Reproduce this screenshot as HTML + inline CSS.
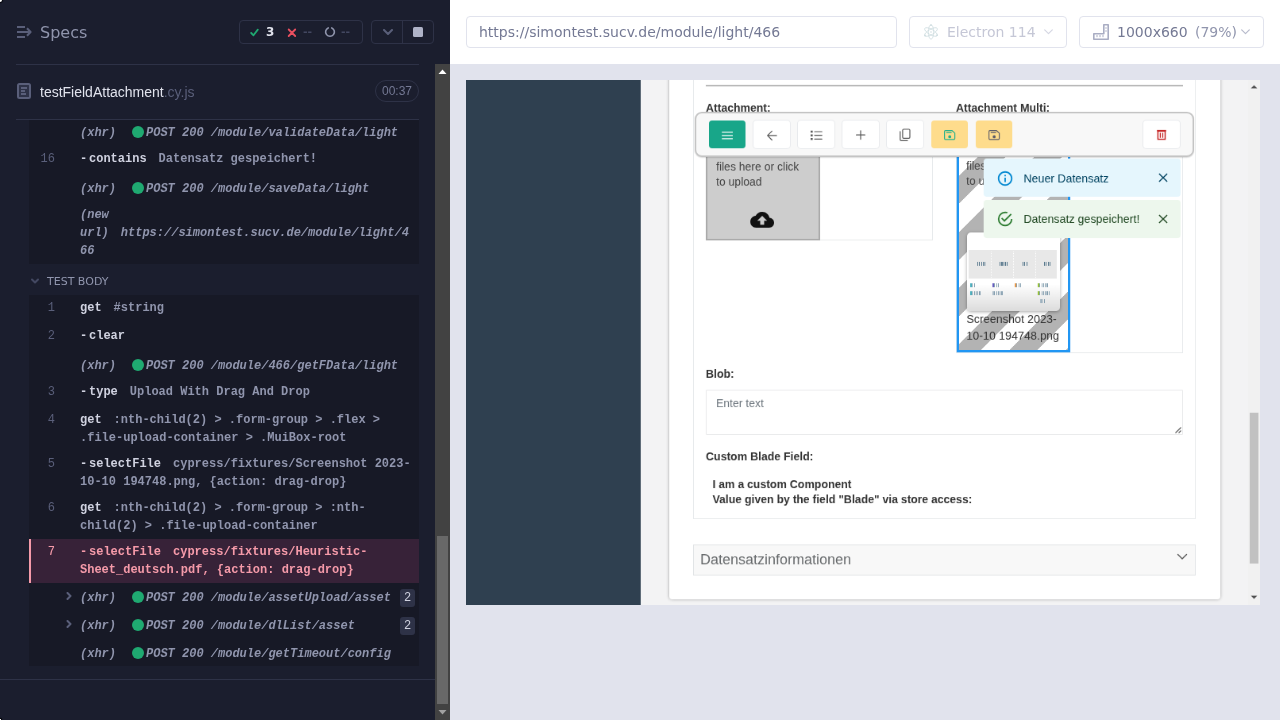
<!DOCTYPE html>
<html lang="en">
<head>
<meta charset="utf-8">
<title>Cypress</title>
<style>
*{box-sizing:border-box;margin:0;padding:0}
html,body{width:1280px;height:720px;overflow:hidden;background:#fff}
body{position:relative;font-family:"Liberation Sans",sans-serif}
.abs{position:absolute}
/* ---------- reporter ---------- */
#rep{will-change:transform;position:absolute;left:0;top:0;width:450px;height:720px;background:#1b1e2e;overflow:hidden}
.ui{font-family:"DejaVu Sans","Liberation Sans",sans-serif}
.mono{font-family:"Liberation Mono",monospace;font-size:12px;line-height:18px;white-space:pre}
.hline{position:absolute;left:16px;width:403px;height:1px;background:#2e3247}
.logbg{position:absolute;left:29px;width:390px;background:#171926}
.row{position:absolute;left:0;width:419px;height:18px}
.num{position:absolute;left:29px;width:26px;text-align:right;color:#5a5f7a;font-family:"Liberation Mono",monospace;font-size:12px;line-height:18px}
.txt{position:absolute;left:80px;font-weight:bold;color:#9095ad;font-family:"Liberation Mono",monospace;font-size:12px;line-height:18px;white-space:pre}
.txt b{color:#d0d2e0;font-weight:bold}
.dash{display:inline-block;width:9px;font-weight:bold;color:#d0d2e0}
.gap{display:inline-block;width:12px}
.gap2{display:inline-block;width:12px}
.pink,.pink b,.pink .dash{color:#f59aa9}
.num.pink{color:#f59aa9}
.xhr{font-style:italic;font-weight:bold;color:#9095ad}
.dot{position:absolute;left:132px;width:12px;height:12px;border-radius:50%;background:#1fa971}
.badge{position:absolute;left:400px;width:15px;height:18px;border-radius:3px;background:#2e3247;color:#d0d2e0;font-family:"Liberation Mono",monospace;font-size:12px;line-height:18px;text-align:center}
/* ---------- right ---------- */
#right{will-change:transform;position:absolute;left:450px;top:0;width:830px;height:720px;background:#e1e3ed}
#hdr{position:absolute;left:0;top:0;width:830px;height:64px;background:#fff}
.box{position:absolute;top:16px;height:32px;border:1px solid #e1e3ed;border-radius:4px;background:#fff}
/* ---------- AUT ---------- */
#autwrap{will-change:transform;position:absolute;left:466px;top:80px;width:794px;height:525px;overflow:hidden;background:#f3f3f4}
#aut{position:absolute;left:0;top:0;width:1000px;height:660px;transform:scale(0.794);transform-origin:0 0;font-family:"Liberation Sans",sans-serif;font-size:13px;color:#333}
.lbl{position:absolute;font-weight:bold;font-size:14px;line-height:16px;color:#333;white-space:pre}
.dz{position:absolute;font-size:14px;line-height:19px;color:#444;white-space:pre}
.tb{position:absolute;top:50.600px;width:46px;height:35.500px;border-radius:4px;background:#fff;box-shadow:0 0 0 1px #e8eaed}
.toast{position:absolute;left:652px;width:248px;height:48px;border-radius:4px;font-size:14.300px;line-height:20px}
.toast span{position:absolute;left:50.200px;top:14.500px;white-space:pre}
.tw{position:absolute;height:5px;background:repeating-linear-gradient(90deg,#2c5670 0,#2c5670 1.200px,transparent 1.200px,transparent 2.300px);opacity:.8}
.ti{position:absolute;height:5px;opacity:.85}
</style>
</head>
<body>
<div id="rep">
<!-- top-left artefact -->
<div class="abs" style="left:0;top:0;width:2px;height:2px;background:#fff;border-radius:0 0 2px 0;box-shadow:0 0 1px 1px #05060c"></div>
<div class="abs" style="left:0;top:719px;width:1px;height:1px;background:#fff;box-shadow:0 0 1px 1px #05060c"></div>
<!-- Specs header -->
<svg class="abs" style="left:17px;top:25px" width="15" height="14" viewBox="0 0 15 14"><g fill="none" stroke="#5a5f7a" stroke-width="2" stroke-linejoin="round"><path d="M0 2h8"/><path d="M0 7h12.500"/><path d="M0 12h8"/><path d="M10 3.300l3.600 3.700-3.600 3.700"/></g></svg>
<div class="abs ui" style="left:40px;top:22px;font-size:16px;line-height:22px;color:#9095ad">Specs</div>
<!-- stats -->
<div class="abs" style="left:239px;top:20px;width:124px;height:24px;border:1px solid #2e3247;border-radius:4px"></div>
<svg class="abs" style="left:249.500px;top:27.500px" width="9" height="9" viewBox="0 0 9 9"><path d="M1.200 5l2.300 2.300L7.800 1.600" fill="none" stroke="#1fa971" stroke-width="1.8" stroke-linecap="round" stroke-linejoin="round"/></svg>
<div class="abs ui" style="left:266px;top:24px;font-size:12px;line-height:16px;font-weight:bold;color:#e1e3ed">3</div>
<svg class="abs" style="left:287px;top:27.500px" width="10" height="10" viewBox="0 0 10 10"><path d="M1.700 1.500l6.500 6.500M8.200 1.500l-6.500 6.500" fill="none" stroke="#e94f5f" stroke-width="1.8" stroke-linecap="round"/></svg>
<div class="abs ui" style="left:303px;top:24px;font-size:11px;line-height:16px;font-weight:bold;color:#434861">--</div>
<svg class="abs" style="left:324px;top:26px" width="12" height="12" viewBox="0 0 12 12"><path d="M4.2 1.9A4.4 4.4 0 1 0 7.8 1.9" fill="none" stroke="#9095ad" stroke-width="1.6" stroke-linecap="round"/></svg>
<div class="abs ui" style="left:341px;top:24px;font-size:11px;line-height:16px;font-weight:bold;color:#434861">--</div>
<!-- controls -->
<div class="abs" style="left:371px;top:20px;width:63px;height:24px;border:1px solid #2e3247;border-radius:4px"></div>
<div class="abs" style="left:402px;top:20px;width:1px;height:24px;background:#2e3247"></div>
<svg class="abs" style="left:383px;top:29px" width="10" height="6" viewBox="0 0 10 6"><path d="M1 1l4 4 4-4" fill="none" stroke="#5a5f7a" stroke-width="2" stroke-linecap="round" stroke-linejoin="round"/></svg>
<div class="abs" style="left:413px;top:27px;width:10px;height:10px;background:#afb3c7;border-radius:1.5px"></div>
<div class="hline" style="top:64px"></div>
<!-- spec file row -->
<svg class="abs" style="left:17px;top:83px" width="14" height="16" viewBox="0 0 14 16"><rect x="1" y="1" width="12" height="14" rx="1.5" fill="#2e3247" stroke="#5a5f7a" stroke-width="2"/><path d="M4 5h6M4 8h4M4 11h5" stroke="#5a5f7a" stroke-width="2"/></svg>
<div class="abs" style="left:40px;top:83px;font-size:14px;line-height:18px;color:#e1e3ed;white-space:pre">testFieldAttachment<span style="color:#5a5f7a">.cy.js</span></div>
<div class="abs" style="left:375px;top:80px;width:44px;height:22px;border:1px solid #2e3247;border-radius:11px;color:#747994;font-size:12px;line-height:20px;text-align:center">00:37</div>
<div class="hline" style="top:119px"></div>
<!-- TEST BODY -->
<svg class="abs" style="left:31px;top:278px" width="8" height="7" viewBox="0 0 8 7"><path d="M1 1.5l3 3 3-3" fill="none" stroke="#434861" stroke-width="2" stroke-linecap="round" stroke-linejoin="round"/></svg>
<div class="abs ui" style="left:47px;top:274px;font-size:11px;line-height:16px;color:#9095ad">TEST BODY</div>
<!-- bottom line + scrollbar -->
<div class="abs" style="left:0;top:679px;width:436px;height:1px;background:#2e3247"></div>
<div class="abs" style="left:435px;top:64px;width:15px;height:656px;background:#424242"></div>
<div class="abs" style="left:437px;top:536px;width:11px;height:168px;background:#686868"></div>
<svg class="abs" style="left:438px;top:69px" width="9" height="6" viewBox="0 0 9 6"><path d="M4.5 0.5L8.5 5h-8z" fill="#fff"/></svg>
<svg class="abs" style="left:438px;top:709px" width="9" height="6" viewBox="0 0 9 6"><path d="M4.5 5.5L8.5 1h-8z" fill="#a0a0a0"/></svg>
<div class="logbg" style="top:120px;height:144px"></div>
<div class="txt xhr" style="top:124px">(xhr)</div><div class="dot" style="top:126px"></div><div class="txt xhr" style="left:146px;top:124px">POST 200 /module/validateData/light</div>
<div class="num " style="top:150px">16</div><div class="txt " style="top:150px"><span class="dash">-</span><b>contains</b><span class=gap></span>Datensatz gespeichert!</div>
<div class="txt xhr" style="top:180px">(xhr)</div><div class="dot" style="top:182px"></div><div class="txt xhr" style="left:146px;top:180px">POST 200 /module/saveData/light</div>
<div class="txt xhr" style="top:206px">(new
url)<span class="gap2"></span>https://simontest.sucv.de/module/light/4
66</div>
<div class="logbg" style="top:295px;height:371px"></div>
<div class="num " style="top:299px">1</div><div class="txt " style="top:299px"><b>get</b><span class=gap></span>#string</div>
<div class="num " style="top:327px">2</div><div class="txt " style="top:327px"><span class="dash">-</span><b>clear</b></div>
<div class="txt xhr" style="top:357px">(xhr)</div><div class="dot" style="top:359px"></div><div class="txt xhr" style="left:146px;top:357px">POST 200 /module/466/getFData/light</div>
<div class="num " style="top:383px">3</div><div class="txt " style="top:383px"><span class="dash">-</span><b>type</b><span class=gap></span>Upload With Drag And Drop</div>
<div class="num " style="top:411px">4</div><div class="txt " style="top:411px"><b>get</b><span class=gap></span>:nth-child(2) &gt; .form-group &gt; .flex &gt;
.file-upload-container &gt; .MuiBox-root</div>
<div class="num " style="top:455px">5</div><div class="txt " style="top:455px"><span class="dash">-</span><b>selectFile</b><span class=gap></span>cypress/fixtures/Screenshot 2023-
10-10 194748.png, {action: drag-drop}</div>
<div class="num " style="top:499px">6</div><div class="txt " style="top:499px"><b>get</b><span class=gap></span>:nth-child(2) &gt; .form-group &gt; :nth-
child(2) &gt; .file-upload-container</div>
<div class="abs" style="left:29px;top:539px;width:390px;height:44px;background:#372238;border-left:2px solid #f59aa9"></div>
<div class="num pink" style="top:543px">7</div><div class="txt pink" style="top:543px"><span class="dash">-</span><b>selectFile</b><span class=gap></span>cypress/fixtures/Heuristic-
Sheet_deutsch.pdf, {action: drag-drop}</div>
<svg class="abs" style="left:66px;top:592px" width="7" height="8" viewBox="0 0 7 8"><path d="M1.500 1l3 3-3 3" fill="none" stroke="#5a5f7a" stroke-width="2" stroke-linecap="round" stroke-linejoin="round"/></svg><div class="txt xhr" style="top:589px">(xhr)</div><div class="dot" style="top:591px"></div><div class="txt xhr" style="left:146px;top:589px">POST 200 /module/assetUpload/asset</div><div class="badge" style="top:589px">2</div>
<svg class="abs" style="left:66px;top:620px" width="7" height="8" viewBox="0 0 7 8"><path d="M1.500 1l3 3-3 3" fill="none" stroke="#5a5f7a" stroke-width="2" stroke-linecap="round" stroke-linejoin="round"/></svg><div class="txt xhr" style="top:617px">(xhr)</div><div class="dot" style="top:619px"></div><div class="txt xhr" style="left:146px;top:617px">POST 200 /module/dlList/asset</div><div class="badge" style="top:617px">2</div>
<div class="txt xhr" style="top:645px">(xhr)</div><div class="dot" style="top:647px"></div><div class="txt xhr" style="left:146px;top:645px">POST 200 /module/getTimeout/config</div>
</div>
<div id="right">
<div id="hdr">
<div class="box" style="left:16px;width:431px"></div>
<div class="abs ui" style="left:29px;top:23px;font-size:14px;line-height:18px;color:#747994;white-space:pre">https://simontest.sucv.de/module/light/466</div>
<div class="box" style="left:459px;width:158px"></div>
<svg class="abs" style="left:473px;top:24px;opacity:.42" width="16" height="16" viewBox="0 0 16 16"><g fill="none" stroke="#8fb0b8" stroke-width="0.800"><ellipse cx="8" cy="8" rx="7.200" ry="2.700" transform="rotate(30 8 8)"/><ellipse cx="8" cy="8" rx="7.200" ry="2.700" transform="rotate(90 8 8)"/><ellipse cx="8" cy="8" rx="7.200" ry="2.700" transform="rotate(150 8 8)"/></g><circle cx="8" cy="8" r="0.800" fill="#8fb0b8"/><circle cx="8" cy="1.200" r="0.900" fill="#8fb0b8"/><circle cx="2" cy="11.500" r="0.900" fill="#8fb0b8"/><circle cx="14" cy="11.200" r="0.900" fill="#8fb0b8"/></svg>
<div class="abs ui" style="left:497px;top:23px;font-size:14px;line-height:18px;color:#c5c7d6;white-space:pre">Electron 114</div>
<svg class="abs" style="left:594px;top:29px" width="9" height="6" viewBox="0 0 9 6"><path d="M0.7 0.9l3.8 3.8 3.8-3.8" fill="none" stroke="#d5d7e3" stroke-width="1.2" stroke-linecap="round" stroke-linejoin="round"/></svg>
<div class="box" style="left:629px;width:185px"></div>
<svg class="abs" style="left:643px;top:24px" width="16" height="16" viewBox="0 0 16 16"><path d="M10.8 0.8h4.4v14.4H0.8v-5.4h10z" fill="none" stroke="#a9adc3" stroke-width="1.6" stroke-linejoin="round"/><path d="M4 11v2.2M7 11v2.2M10 11v2.2M12.2 4h1.6M12.2 7h1.6" stroke="#a9adc3" stroke-width="1"/></svg>
<div class="abs ui" style="left:667px;top:23px;font-size:14px;line-height:18px;color:#747994;white-space:pre">1000x660</div>
<div class="abs ui" style="left:745px;top:23px;font-size:14px;line-height:18px;color:#9095ad;white-space:pre">(79%)</div>
<svg class="abs" style="left:791px;top:29px" width="9" height="6" viewBox="0 0 9 6"><path d="M0.7 0.9l3.8 3.8 3.8-3.8" fill="none" stroke="#b8bbcc" stroke-width="1.2" stroke-linecap="round" stroke-linejoin="round"/></svg>
</div>
</div>
<div id="autwrap"><div id="aut">
<div class="abs" style="left:0;top:0;width:220px;height:664px;background:#2f4050"></div>
<!-- card -->
<div class="abs" style="left:256px;top:-40px;width:693.500px;height:693.500px;background:#fff;border-radius:0 0 4px 4px;box-shadow:0 0 4px rgba(0,0,0,.3)"></div>
<!-- inner box -->
<div class="abs" style="left:286px;top:-40px;width:633px;height:593px;border:1px solid #e7eaec"></div>
<div class="abs" style="left:302px;top:6px;width:601px;height:2px;background:#b9b9b9"></div>
<div class="lbl" style="left:302px;top:27px">Attachment:</div>
<div class="lbl" style="left:617px;top:27px">Attachment Multi:</div>
<!-- container 1 -->
<div class="abs" style="left:302px;top:50px;width:286px;height:152px;border:1px solid #e7eaec"></div>
<div class="abs" style="left:302px;top:50px;width:144px;height:152px;background:#cdcdcd;border:2px solid #aaa"></div>
<div class="dz" style="left:315px;top:74px">Drag 'n' drop some</div>
<div class="dz" style="left:315px;top:99.5px">files here or click
to upload</div>
<svg class="abs" style="left:358px;top:161px" width="30" height="30" viewBox="0 0 24 24"><path fill="#111" d="M19.35 10.04C18.67 6.59 15.64 4 12 4 9.11 4 6.6 5.64 5.35 8.04 2.34 8.36 0 10.91 0 14c0 3.31 2.69 6 6 6h13c2.76 0 5-2.24 5-5 0-2.64-2.05-4.78-4.65-4.96zM14 13v4h-4v-4H7l5-5 5 5h-3z"/></svg>
<!-- container 2 -->
<div class="abs" style="left:617px;top:50px;width:286px;height:294px;border:1px solid #e7eaec"></div>
<div class="abs" style="left:618px;top:50px;width:143px;height:293px;border:3px solid #2196f3;background:repeating-linear-gradient(-45deg,#b3b3b3 0,#b3b3b3 2.100px,#fff 2.100px,#fff 27.100px,#b3b3b3 27.100px,#b3b3b3 50px)"></div>
<div class="dz" style="left:631px;top:74px">Drag 'n' drop some</div>
<div class="dz" style="left:630px;top:98.700px">files here or click
to upload</div>
<!-- thumbnail -->
<div class="abs" style="left:631px;top:191.500px;width:117px;height:99px;border-radius:5px;background:linear-gradient(#fff 0,#fff 66%,#dcdcdc 100%);box-shadow:0 1px 4px rgba(0,0,0,.35);overflow:hidden">
  <div class="abs" style="left:2px;top:22.500px;width:111px;height:36px;background:#e8e8e8"></div>
  <div class="abs" style="left:30px;top:24px;width:0;height:33px;border-left:1px dotted #fff"></div>
  <div class="abs" style="left:58px;top:24px;width:0;height:33px;border-left:1px dotted #fff"></div>
  <div class="abs" style="left:86px;top:24px;width:0;height:33px;border-left:1px dotted #fff"></div>
  <div class="tw" style="left:12.5px;top:37.500px;width:11px"></div><div class="tw" style="left:40.5px;top:37.500px;width:11px"></div><div class="tw" style="left:70px;top:37.500px;width:7px"></div><div class="tw" style="left:96.5px;top:37.500px;width:9px"></div>
  <div class="ti" style="left:3.5px;top:64.5px;width:7px;background:linear-gradient(90deg,#2aa3b3 0,#2aa3b3 2px,transparent 2px),repeating-linear-gradient(90deg,#6f8fa3 0,#6f8fa3 1.200px,transparent 1.200px,transparent 2.300px)"></div><div class="ti" style="left:3.5px;top:74.5px;width:13px;background:linear-gradient(90deg,#2aa3b3 0,#2aa3b3 2px,transparent 2px),repeating-linear-gradient(90deg,#6f8fa3 0,#6f8fa3 1.200px,transparent 1.200px,transparent 2.300px)"></div>
  <div class="ti" style="left:32px;top:64.5px;width:9px;background:linear-gradient(90deg,#4b3fb5 0,#4b3fb5 2px,transparent 2px),repeating-linear-gradient(90deg,#6f8fa3 0,#6f8fa3 1.200px,transparent 1.200px,transparent 2.300px)"></div><div class="ti" style="left:32px;top:74.5px;width:14px;background:linear-gradient(90deg,#9fb2c0 0,#9fb2c0 2px,transparent 2px),repeating-linear-gradient(90deg,#6f8fa3 0,#6f8fa3 1.200px,transparent 1.200px,transparent 2.300px)"></div>
  <div class="ti" style="left:60px;top:64.5px;width:9px;background:linear-gradient(90deg,#e8892b 0,#e8892b 2px,transparent 2px),repeating-linear-gradient(90deg,#6f8fa3 0,#6f8fa3 1.200px,transparent 1.200px,transparent 2.300px)"></div>
  <div class="ti" style="left:88.5px;top:64.5px;width:13px;background:linear-gradient(90deg,#86b817 0,#86b817 2px,transparent 2px),repeating-linear-gradient(90deg,#6f8fa3 0,#6f8fa3 1.200px,transparent 1.200px,transparent 2.300px)"></div><div class="ti" style="left:88.5px;top:74.5px;width:16px;background:linear-gradient(90deg,#86b817 0,#86b817 2px,transparent 2px),repeating-linear-gradient(90deg,#6f8fa3 0,#6f8fa3 1.200px,transparent 1.200px,transparent 2.300px)"></div><div class="ti" style="left:92px;top:84.5px;width:6px;background:linear-gradient(90deg,#9fb2c0 0,#9fb2c0 2px,transparent 2px),repeating-linear-gradient(90deg,#6f8fa3 0,#6f8fa3 1.200px,transparent 1.200px,transparent 2.300px)"></div>
</div>
<div class="dz" style="left:630.200px;top:291px;font-size:14.400px;line-height:20.600px;color:#333">Screenshot 2023-
10-10 194748.png</div>
<!-- blob -->
<div class="lbl" style="left:302px;top:362px">Blob:</div>
<div class="abs" style="left:302px;top:390px;width:600.500px;height:56.500px;border:1px solid #e9eaeb;border-radius:1px;background:#fff"></div>
<div class="abs" style="left:315px;top:399px;font-size:14px;line-height:16px;color:#6c757d">Enter text</div>
<svg class="abs" style="left:893px;top:437px" width="8" height="8" viewBox="0 0 8 8"><path d="M7.500 0.500L0.500 7.500M7.500 4.500L4.500 7.500" stroke="#555" stroke-width="1.100" fill="none"/></svg>
<div class="lbl" style="left:302px;top:466px">Custom Blade Field:</div>
<div class="lbl" style="left:310.500px;top:500px;line-height:18.600px">I am a custom Component
Value given by the field "Blade" via store access:</div>
<!-- accordion -->
<div class="abs" style="left:286px;top:585px;width:633px;height:39px;border:1px solid #e1e4e6;background:#f8f8f8"></div>
<div class="abs" style="left:295px;top:593px;font-size:18px;line-height:22px;color:#676a6c;white-space:pre">Datensatzinformationen</div>
<svg class="abs" style="left:894.500px;top:596px" width="14" height="9" viewBox="0 0 14 9"><path d="M1.500 1.500L7 7l5.500-5.500" fill="none" stroke="#555" stroke-width="1.400" stroke-linecap="round" stroke-linejoin="round"/></svg>
<!-- toolbar -->
<div class="abs" style="left:288px;top:40.300px;width:629px;height:56.500px;border:2px solid #c4c4c4;border-radius:9px;background:#f8f8f8;box-shadow:0 1px 1.500px rgba(0,0,0,.15)"></div>
<div class="tb" style="left:306px;background:#18a689;box-shadow:none"></div>
<div class="tb" style="left:362px"></div>
<div class="tb" style="left:418px"></div>
<div class="tb" style="left:474px"></div>
<div class="tb" style="left:530px"></div>
<div class="tb" style="left:586px;background:#fedc8c;box-shadow:none"></div>
<div class="tb" style="left:642px;background:#fedc8c;box-shadow:none"></div>
<div class="tb" style="left:852.500px"></div>
<svg class="abs" style="left:288px;top:41px" width="629" height="55" viewBox="288 41 629 55" fill="none" stroke-linecap="butt">
<path d="M322.200 65.700h13.800M322.200 69.800h13.800M322.200 73.900h13.800" stroke="#fff" stroke-width="1.300"/>
<path d="M380 69.900H391.100M385.300 64.300L379.700 69.900L385.300 75.500" stroke="#555" stroke-width="1.200" stroke-linecap="round" stroke-linejoin="round"/>
<path d="M434.100 63.800h2.500v2.500h-2.500zM434.100 68.400h2.500v2.500h-2.500zM434.100 73h2.500v2.500h-2.500z" fill="#555"/>
<path d="M439 65h9.200M439 69.600h9.200M439 74.300h9.200" stroke="#555" stroke-width="1.200" stroke-linecap="round"/>
<path d="M491.600 69.200h10.800M497 63.800v10.800" stroke="#555" stroke-width="1.200" stroke-linecap="round"/>
<rect x="549.900" y="62" width="9.100" height="11.400" rx="1.300" stroke="#555" stroke-width="1.200"/>
<path d="M546.800 64.800V75a1.300 1.300 0 0 0 1.300 1.300H556" stroke="#555" stroke-width="1.200" stroke-linecap="round"/>
<g stroke="#21b08c" stroke-width="1.200"><path d="M603.900 63.700h8.300l3.400 3.200v6.700a1.300 1.300 0 0 1-1.300 1.300h-10.400a1.300 1.300 0 0 1-1.300-1.300v-8.600a1.300 1.300 0 0 1 1.300-1.300z" stroke-linejoin="round"/><path d="M604.800 66.200h6.800" stroke-width="1.300"/><circle cx="609.200" cy="71.400" r="1.300" fill="#21b08c"/></g>
<g stroke="#5a5a68" stroke-width="1.200" transform="translate(56 0)"><path d="M603.900 63.700h8.300l3.400 3.200v6.700a1.300 1.300 0 0 1-1.300 1.300h-10.400a1.300 1.300 0 0 1-1.300-1.300v-8.600a1.300 1.300 0 0 1 1.300-1.300z" stroke-linejoin="round"/><path d="M604.800 66.200h6.800" stroke-width="1.300"/><circle cx="609.200" cy="71.400" r="1.300" fill="#5a5a68"/></g>
<g stroke="#c62828"><rect x="871.400" y="64.400" width="9.100" height="10.200" stroke-width="1.500"/><path d="M870.200 63.800h11.500" stroke-width="1.800"/><path d="M874.400 66.500v6.200M877.500 66.500v6.200" stroke-width="1.300"/></g>
</svg>
<!-- toasts -->
<div class="toast" style="top:98.900px;background:#e5f6fd;color:#014361"><svg class="abs" style="left:16px;top:14px" width="22" height="22" viewBox="0 0 24 24"><path fill="#0288d1" d="M11 7h2v2h-2zm0 4h2v6h-2zm1-9C6.480 2 2 6.480 2 12s4.480 10 10 10 10-4.480 10-10S17.520 2 12 2zm0 18c-4.410 0-8-3.590-8-8s3.590-8 8-8 8 3.590 8 8-3.590 8-8 8z"/></svg><span style="top:15.100px">Neuer Datensatz</span><svg class="abs" style="left:219.900px;top:18.400px" width="12" height="12" viewBox="0 0 12 12"><path d="M0.900 0.900l10.200 10.200M11.100 0.900L0.900 11.100" stroke="#014361" stroke-width="1.400" fill="none"/></svg></div>
<div class="toast" style="top:151.100px;background:#edf7ed;color:#1e4620"><svg class="abs" style="left:16px;top:13.300px" width="22" height="22" viewBox="0 0 24 24"><path fill="#2e7d32" d="M20,12A8,8 0 0,1 12,20A8,8 0 0,1 4,12A8,8 0 0,1 12,4C12.760,4 13.500,4.110 14.200,4.310L15.770,2.740C14.610,2.260 13.340,2 12,2A10,10 0 0,0 2,12A10,10 0 0,0 12,22A10,10 0 0,0 22,12M7.910,10.080L6.500,11.500L11,16L21,6L19.590,4.580L11,13.170L7.910,10.080Z"/></svg><span style="top:14.100px">Datensatz gespeichert!</span><svg class="abs" style="left:219.900px;top:18.400px" width="12" height="12" viewBox="0 0 12 12"><path d="M0.900 0.900l10.200 10.200M11.100 0.900L0.900 11.100" stroke="#1e4620" stroke-width="1.400" fill="none"/></svg></div>
<!-- AUT scrollbar -->
<div class="abs" style="left:985px;top:0;width:15px;height:664px;background:#f1f1f1"></div>
<div class="abs" style="left:987px;top:419px;width:11px;height:190px;background:#c1c1c1"></div>
<svg class="abs" style="left:988px;top:6px" width="9" height="5" viewBox="0 0 9 5"><path d="M4.500 0.500L8.500 4.500h-8z" fill="#505050"/></svg>
<svg class="abs" style="left:988px;top:649px" width="9" height="5" viewBox="0 0 9 5"><path d="M4.500 4.500L8.500 0.500h-8z" fill="#505050"/></svg>
</div></div>
</body>
</html>
